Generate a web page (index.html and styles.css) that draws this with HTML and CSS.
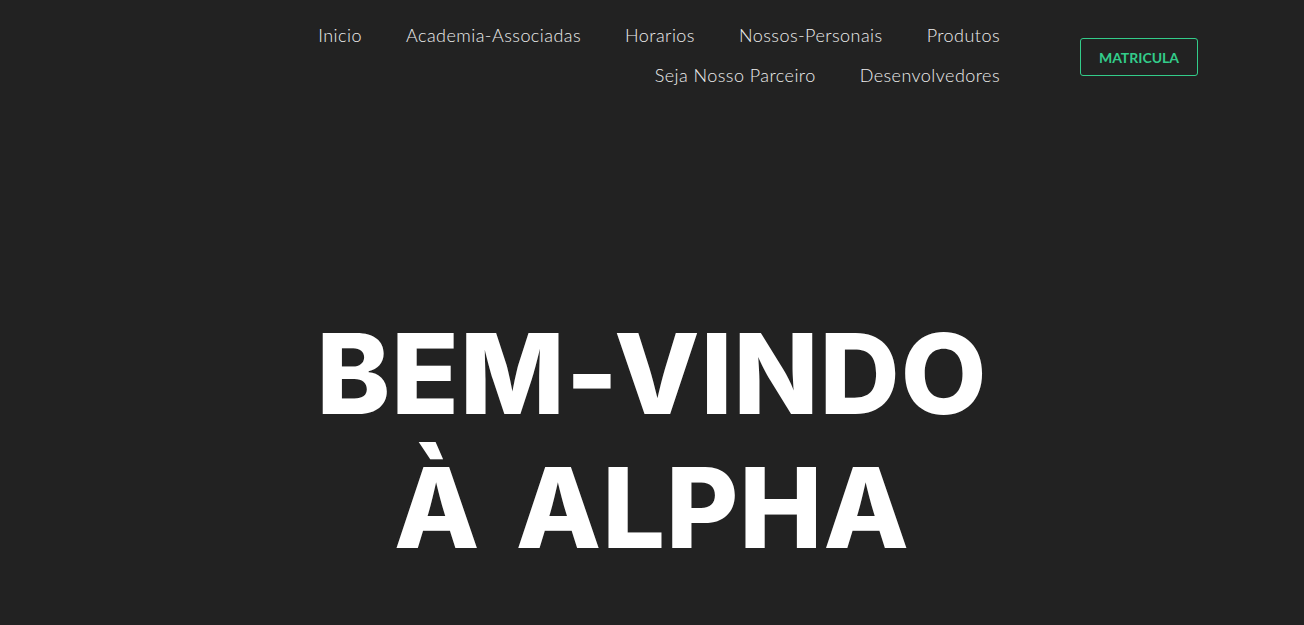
FILE: index.html
```html
<!DOCTYPE html>
<html lang="pt">
<head>
<meta charset="utf-8">
<title>Alpha</title>
<link rel="stylesheet" href="styles.css">
</head>
<body>
<header class="header">
  <div class="logo"></div>
  <nav class="nav">
    <a href="#" class="nav-link">Inicio</a>
    <a href="#" class="nav-link">Academia-Associadas</a>
    <a href="#" class="nav-link">Horarios</a>
    <a href="#" class="nav-link">Nossos-Personais</a>
    <a href="#" class="nav-link">Produtos</a>
    <a href="#" class="nav-link">Seja Nosso Parceiro</a>
    <a href="#" class="nav-link">Desenvolvedores</a>
  </nav>
  <a href="#" class="btn-matricula">MATRICULA</a>
</header>
<main class="hero">
  <h1 class="hero-title">BEM-VINDO<br>À ALPHA</h1>
</main>
</body>
</html>
```
FILE: styles.css
```css
* { box-sizing: border-box; }
html, body {
  margin: 0;
  padding: 0;
  background: #222222;
  height: 100%;
  overflow: hidden;
}
body {
  font-family: "Lato", "Open Sans", sans-serif;
  color: #e6e6e6;
}
.header {
  display: flex;
  align-items: flex-start;
  padding: 15px 106px 0 300px;
}
.logo { display: none; }
.nav {
  flex: 1;
  display: flex;
  flex-wrap: wrap;
  justify-content: flex-end;
  column-gap: 44px;
}
.nav-link {
  color: #ededed;
  text-decoration: none;
  font-size: 18px;
  font-weight: 300;
  line-height: 40px;
  letter-spacing: 0.45px;
}
.btn-matricula {
  margin-left: 80px;
  margin-top: 23px;
  width: 118px;
  height: 38px;
  border: 1px solid #33cc8a;
  border-radius: 3px;
  color: #33cc8a;
  font-family: "Lato", sans-serif;
  font-weight: 700;
  font-size: 14px;
  display: flex;
  align-items: center;
  justify-content: center;
  text-decoration: none;
}
.hero {
  display: flex;
  justify-content: center;
  padding-top: 212px;
}
.hero-title {
  margin: 0;
  text-align: center;
  font-family: "Inter", "Liberation Sans", sans-serif;
  font-weight: 800;
  font-size: 111px;
  line-height: 134px;
  letter-spacing: 1px;
  word-spacing: 10px;
  color: #ffffff;
}
```
